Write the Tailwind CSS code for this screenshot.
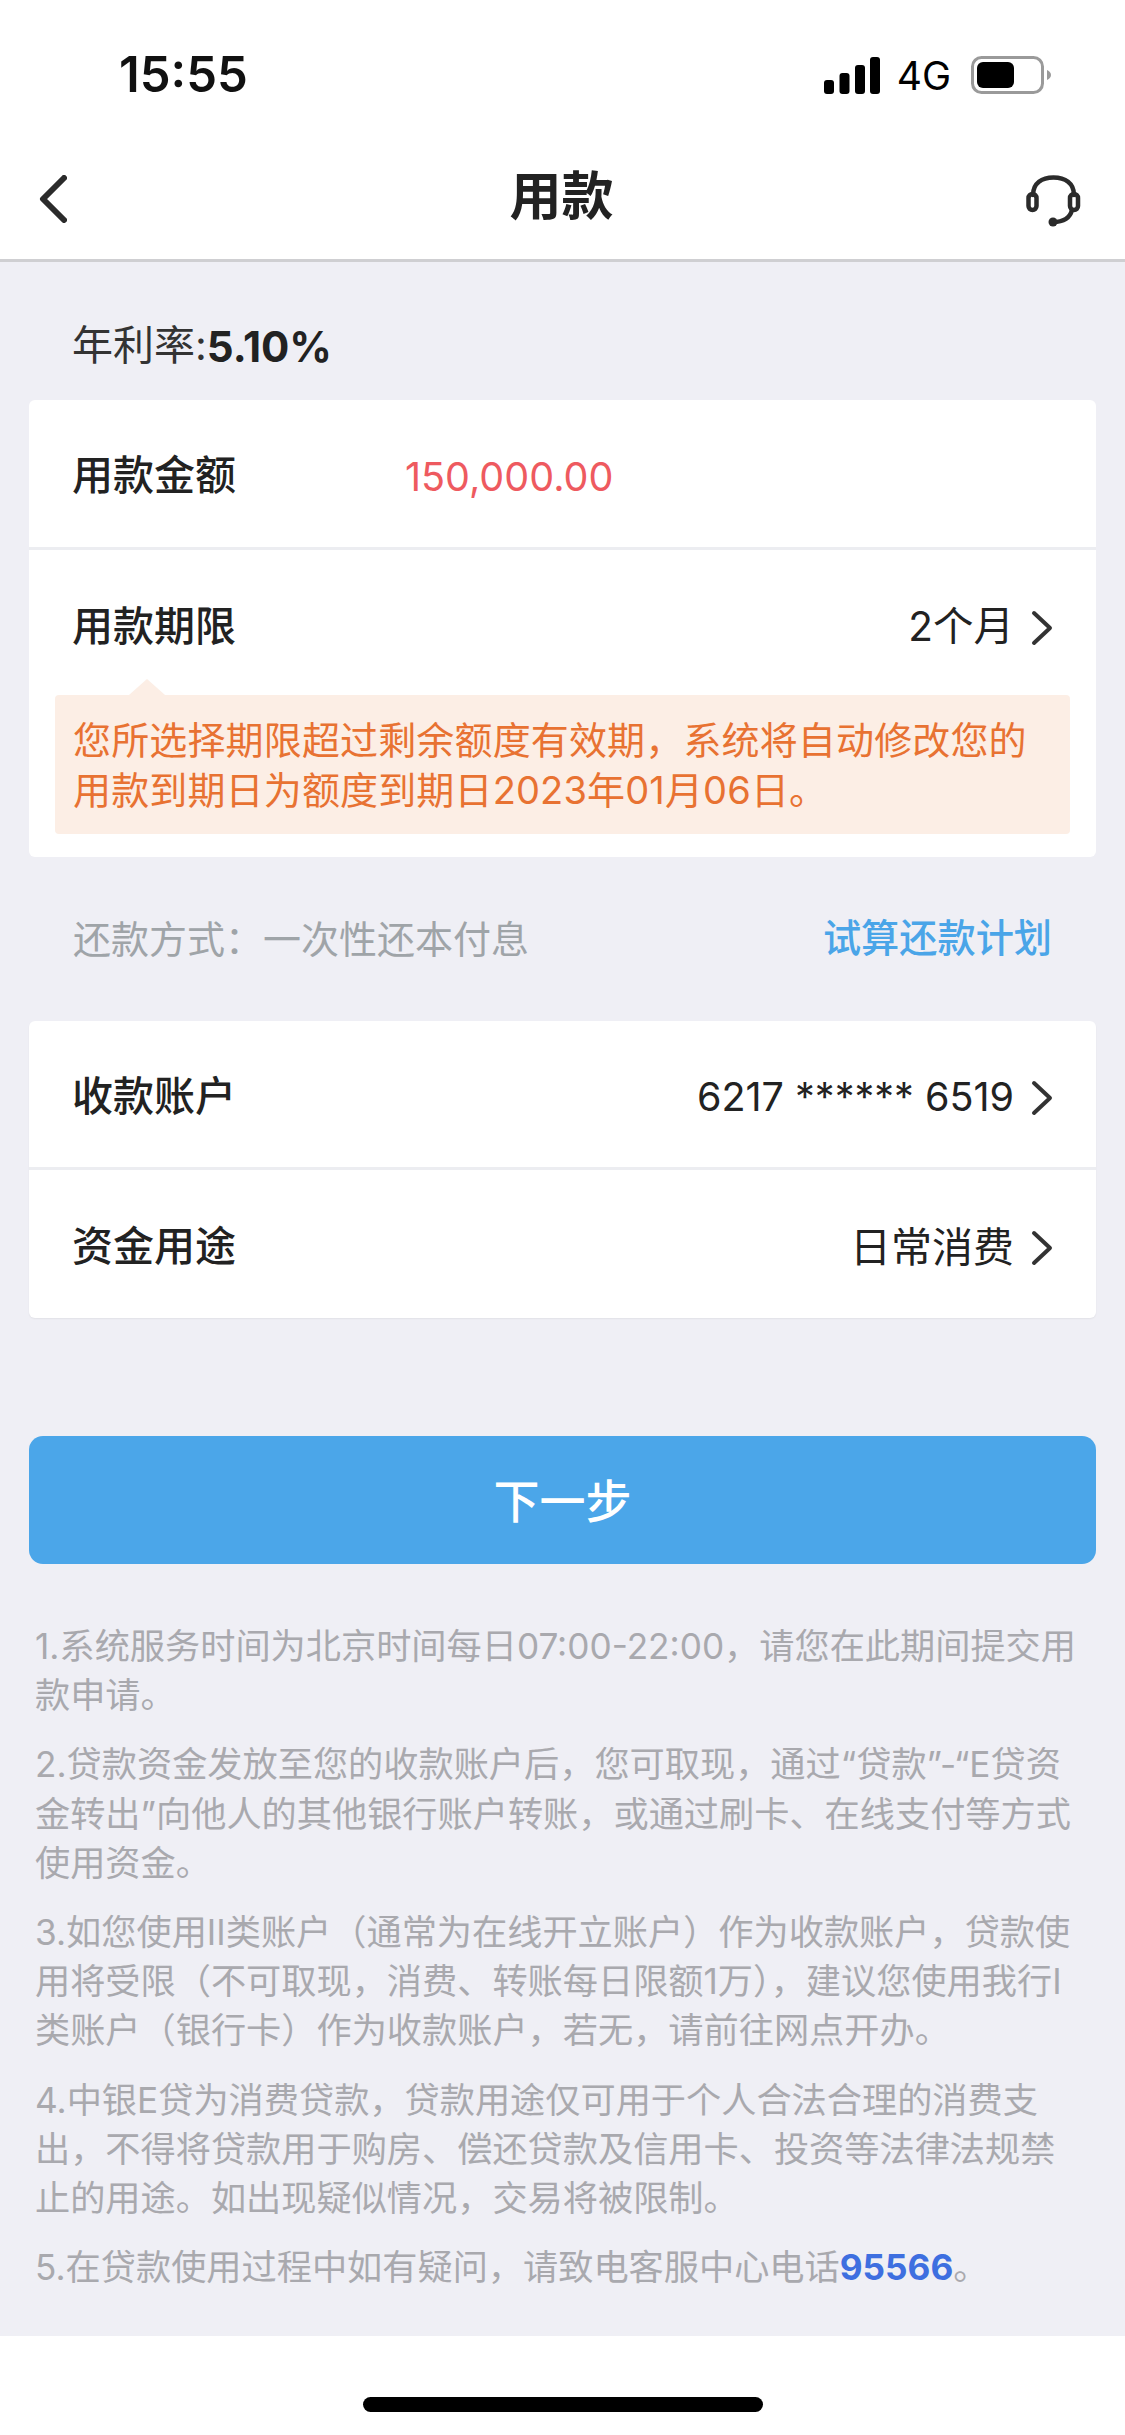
<!DOCTYPE html>
<html lang="zh">
<head>
    <meta charset="UTF-8">
    <meta name="viewport" content="width=device-width, initial-scale=1.0">
    <title>用款</title>
    <script src="https://cdn.jsdelivr.net/npm/@tailwindcss/browser@4"></script>
</head>
<body class="bg-white w-[1125px] h-[2435px] overflow-hidden font-['Inter','Noto_Sans_CJK_SC',sans-serif] text-[#222]">
    <!-- 状态栏 -->
    <div class="h-[131px] flex items-start">
        <div class="ml-[119px] mt-[47px] text-[49px] leading-[56px] font-semibold text-[#111]">15:55</div>
        <div class="ml-auto mt-[56px] mr-[74px] flex items-center">
            <svg class="w-[56px] h-[37px]" viewBox="0 0 56 37" fill="#000">
                <rect x="0" y="23" width="10" height="14" rx="3"/>
                <rect x="15.500" y="16" width="10" height="21" rx="3"/>
                <rect x="31" y="8" width="10" height="29" rx="3"/>
                <rect x="46" y="0" width="10" height="37" rx="3"/>
            </svg>
            <span class="ml-[17px] text-[39px] leading-[37px] text-black">4G</span>
            <svg class="ml-[20px] w-[80px] h-[38px]" viewBox="0 0 80 38" fill="none">
                <rect x="1.500" y="1.500" width="70" height="35" rx="9" stroke="#9a9a9a" stroke-width="3"/>
                <rect x="6" y="6" width="37" height="26" rx="6" fill="#000"/>
                <path d="M76 14 q4 2 4 5 q0 3 -4 5z" fill="#9a9a9a"/>
            </svg>
        </div>
    </div>

    <!-- 标题栏 -->
    <div class="h-[131px] flex items-center justify-between pl-[39px] pr-[44px] pb-[1px] border-b-[3px] border-[#cfcfd2]">
        <div class="w-[55px] mt-[8px]">
            <svg class="w-[28px] h-[48px]" viewBox="0 0 28 48" fill="none" stroke="#2b2b2b" stroke-width="6" stroke-linecap="round" stroke-linejoin="round">
                <path d="M25 3 L4 24 L25 45"/>
            </svg>
        </div>
        <h1 class="text-[52px] leading-[60px] font-bold text-[#222] mt-[5px] ml-[3px]">用款</h1>
        <svg class="w-[55px] h-[52px] mt-[12px]" viewBox="0 0 55 52" fill="none" stroke="#2b2b2b" stroke-width="4.500" stroke-linecap="round">
            <path d="M7 20 C7 8 16 2.500 27.500 2.500 C39 2.500 48 8 48 20"/>
            <rect x="2.500" y="19" width="8" height="16" rx="4"/>
            <rect x="44" y="19" width="8" height="16" rx="4"/>
            <path d="M46 35 C44 43 37 47 27 47"/>
            <circle cx="27" cy="47" r="4.500" fill="#2b2b2b" stroke="none"/>
        </svg>
    </div>

    <main class="bg-[#efeff5] h-[2074px]">
        <div class="h-[138px] pt-[30px] pl-[72px] flex items-center text-[41px] text-[#333]">
            <span>年利率:</span><span class="text-[42px] font-bold text-[#222]">5.10%</span>
        </div>

        <!-- 用款信息 -->
        <section class="mx-[29px] w-[1067px] bg-white rounded-[6px]">
            <div class="h-[150px] pt-[5px] flex items-center pl-[43px] border-b-[3px] border-[#ecedf1]">
                <span class="w-[333px] text-[41px] font-medium text-[#222]">用款金额</span>
                <span class="pt-[3px] text-[39.500px] text-[#ee5a5f]">150,000.00</span>
            </div>
            <div class="h-[145px] pt-[50px] flex items-start justify-between pl-[43px] pr-[42px]">
                <span class="text-[41px] leading-[52px] font-medium text-[#222]">用款期限</span>
                <span class="flex items-center h-[52px] pt-[3px] text-[40.500px] text-[#222]">2个月
                    <svg class="ml-[16px] w-[24px] h-[36px]" viewBox="0 0 24 36" fill="none" stroke="#333" stroke-width="4" stroke-linecap="round" stroke-linejoin="round"><path d="M4 3 L20 18 L4 33"/></svg>
                </span>
            </div>
            <div class="relative mx-[26px] h-[139px] bg-[#fceee5] rounded-[4px] flex items-center pl-[18px] text-[38px] tracking-[0.150px] leading-[50px] text-[#e87232] whitespace-nowrap">
                <div class="absolute left-[74px] top-[-16px] w-0 h-0 border-x-[18px] border-x-transparent border-b-[16px] border-b-[#fceee5]"></div>
                <p>您所选择期限超过剩余额度有效期，系统将自动修改您的<br>用款到期日为额度到期日2023年01月06日。</p>
            </div>
            <div class="h-[23px]"></div>
        </section>

        <!-- 还款方式 -->
        <div class="h-[164px] flex items-center justify-between pl-[73px] pr-[73px] text-[38px]">
            <span class="text-[#9fa4a8]">还款方式：一次性还本付息</span>
            <span class="text-[38.200px] font-medium text-[#4aa5e8]">试算还款计划</span>
        </div>

        <!-- 收款账户 -->
        <section class="mx-[29px] w-[1067px] bg-white rounded-[6px] shadow-[0_1px_2px_rgba(0,0,0,0.06)]">
            <div class="h-[149px] pt-[5px] flex items-center justify-between pl-[43px] pr-[42px] border-b-[3px] border-[#ecedf1]">
                <span class="text-[41px] font-medium text-[#222]">收款账户</span>
                <span class="flex items-center pt-[2px] text-[39.500px] text-[#222]">6217 ****** 6519
                    <svg class="ml-[16px] w-[24px] h-[36px]" viewBox="0 0 24 36" fill="none" stroke="#333" stroke-width="4" stroke-linecap="round" stroke-linejoin="round"><path d="M4 3 L20 18 L4 33"/></svg>
                </span>
            </div>
            <div class="h-[148px] pt-[5px] flex items-center justify-between pl-[43px] pr-[42px]">
                <span class="text-[41px] font-medium text-[#222]">资金用途</span>
                <span class="flex items-center pt-[2px] text-[41px] text-[#222]">日常消费
                    <svg class="ml-[16px] w-[24px] h-[36px]" viewBox="0 0 24 36" fill="none" stroke="#333" stroke-width="4" stroke-linecap="round" stroke-linejoin="round"><path d="M4 3 L20 18 L4 33"/></svg>
                </span>
            </div>
        </section>

        <button class="block mx-[29px] mt-[118px] w-[1067px] h-[128px] pt-[2px] bg-[#4ba6e9] rounded-[14px] text-[46px] font-medium text-white">下一步</button>

        <!-- 说明 -->
        <div class="mt-[58px] pl-[35px] text-[35.200px] leading-[49.200px] text-[#a9a9ae] whitespace-nowrap flex flex-col gap-[20px]">
            <p>1.系统服务时间为北京时间每日07:00-22:00，请您在此期间提交用<br>款申请。</p>
            <p>2.贷款资金发放至您的收款账户后，您可取现，通过“贷款”-“E贷资<br>金转出”向他人的其他银行账户转账，或通过刷卡、在线支付等方式<br>使用资金。</p>
            <p>3.如您使用II类账户（通常为在线开立账户）作为收款账户，贷款使<br>用将受限（不可取现，消费、转账每日限额1万），建议您使用我行I<br>类账户（银行卡）作为收款账户，若无，请前往网点开办。</p>
            <p>4.中银E贷为消费贷款，贷款用途仅可用于个人合法合理的消费支<br>出，不得将贷款用于购房、偿还贷款及信用卡、投资等法律法规禁<br>止的用途。如出现疑似情况，交易将被限制。</p>
            <p>5.在贷款使用过程中如有疑问，请致电客服中心电话<span class="font-bold text-[#3e6fe0]">95566</span>。</p>
        </div>
    </main>

    <!-- Home 指示条 -->
    <div class="pt-[61px] flex justify-center">
        <div class="w-[400px] h-[15px] rounded-full bg-black"></div>
    </div>
</body>
</html>
